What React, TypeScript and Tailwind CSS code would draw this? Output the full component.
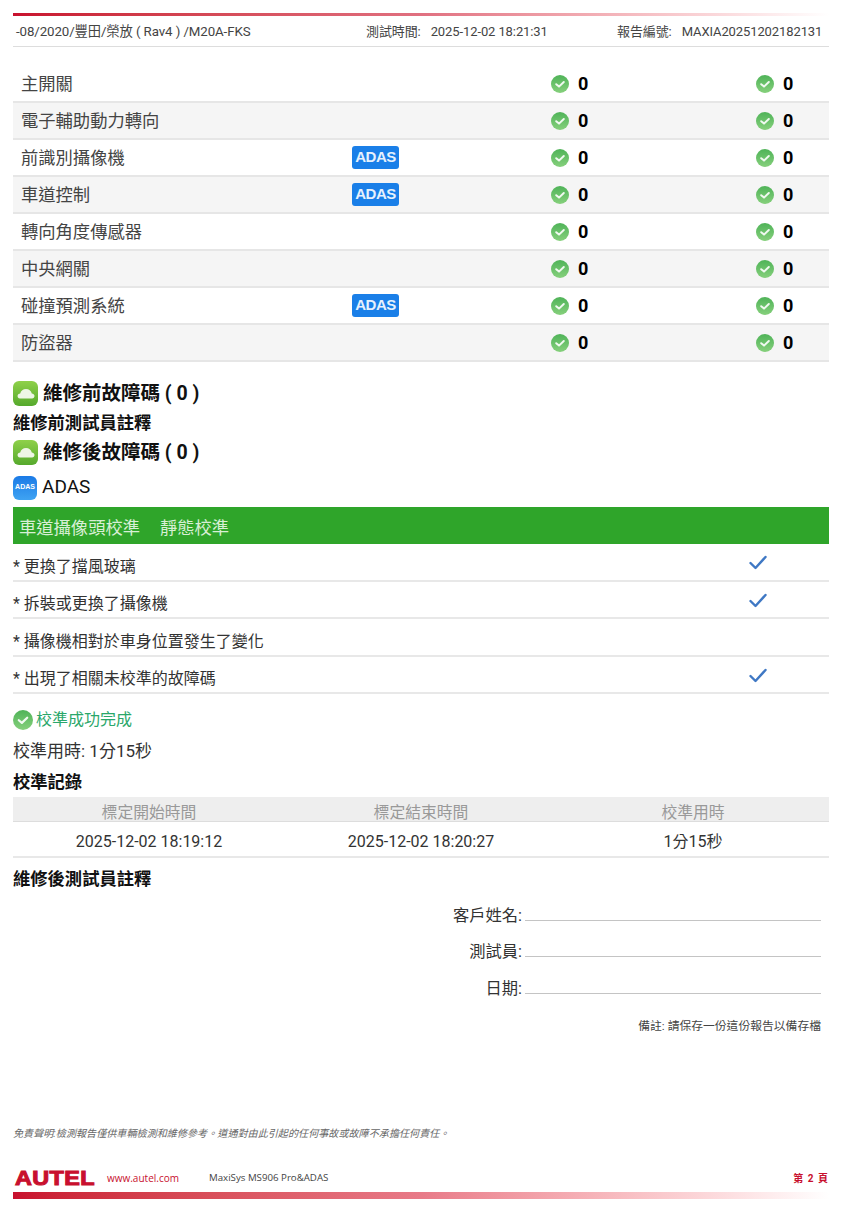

const Check = ({ s = 18 }: { s?: number }) => (
  <svg width={s} height={s} viewBox="0 0 18 18" className="shrink-0">
    <defs>
      <linearGradient id="gc" x1="0" y1="0" x2="0" y2="1">
        <stop offset="0" stopColor="#4fb358" />
        <stop offset="1" stopColor="#86d07c" />
      </linearGradient>
    </defs>
    <circle cx="9" cy="9" r="9" fill="url(#gc)" />
    <path d="M5.2 9.2 L8 11.6 L12.8 7" fill="none" stroke="#fff" strokeWidth="2" strokeLinecap="round" strokeLinejoin="round" opacity="0.9" />
  </svg>
);

const AdasBadge = () => (
  <div className="w-[47px] h-[23px] rounded-[3px] bg-[#1a7fe8] flex items-center justify-center text-[#e6f1fd] text-[15px] font-bold tracking-[-0.5px] font-['Liberation_Sans',sans-serif]">
    ADAS
  </div>
);

const CarIcon = () => (
  <div className="w-[25px] h-[25px] rounded-[6px] bg-gradient-to-b from-[#8fd14a] to-[#55a92c] flex items-center justify-center shrink-0">
    <svg width="18" height="11" viewBox="0 0 18 11">
      <path d="M3 10.5 C1.2 10.5 0.3 9 0.6 7.5 C0.9 6.2 2 5.4 3.2 5.4 C4 2.6 6 1 9 1 C12 1 14 2.6 14.8 5.4 C16.2 5.4 17.4 6.3 17.5 7.8 C17.6 9.3 16.5 10.5 15 10.5 Z" fill="#eef6e6" />
    </svg>
  </div>
);

const rows = [
  ["主開關", false],
  ["電子輔助動力轉向", false],
  ["前識別攝像機", true],
  ["車道控制", true],
  ["轉向角度傳感器", false],
  ["中央網關", false],
  ["碰撞預測系統", true],
  ["防盜器", false],
] as const;

const checks = [
  ["* 更換了擋風玻璃", true],
  ["* 拆裝或更換了攝像機", true],
  ["* 攝像機相對於車身位置發生了變化", false],
  ["* 出現了相關未校準的故障碼", true],
] as const;

const Zero = () => (
  <div className="flex items-center gap-[9px]">
    <Check />
    <span className="text-[18px] font-bold text-black leading-none">0</span>
  </div>
);

const SignRow = ({ label }: { label: string }) => (
  <div className="flex items-end justify-end h-[36.5px] pr-[8px]">
    <span className="text-[16.3px] text-[#333] leading-[22px] mr-[3px]">{label}</span>
    <div className="w-[296px] border-b border-[#c4c4c4] mb-[6px]" />
  </div>
);

export default function App() {
  return (
    <div className="w-[845px] h-[1209px] bg-white overflow-hidden pl-[13px] pr-[16px] pt-[13px] font-['Roboto','Noto_Sans_CJK_TC',sans-serif] text-[#333]">
      <div className="h-[3px] bg-gradient-to-r from-[#c8102e] via-[#e07080] to-white" />
      <div className="h-[31px] pt-[2px] border-b border-[#ddd] flex items-center text-[13px] text-[#444] pl-[3px] tracking-[-0.1px] whitespace-nowrap">
        <span className="w-[350px] text-[13.3px]">-08/2020/豐田/榮放 ( Rav4 ) /M20A-FKS</span>
        <span className="w-[251px]">測試時間:<span className="ml-[10px]">2025-12-02 18:21:31</span></span>
        <span>報告編號:<span className="ml-[10px]">MAXIA20251202182131</span></span>
      </div>

      <div className="mt-[19px]">
        {rows.map(([name, adas], i) => (
          <div
            key={name}
            className={`h-[37px] border-b-2 border-[#e6e6e6] flex items-center text-[17.3px] text-[#444] pl-[8px] ${i % 2 ? "bg-[#f5f5f5]" : "bg-white"}`}
          >
            <span className="w-[331px] pt-[3px]">{name}</span>
            <div className="w-[199px]">{adas && <AdasBadge />}</div>
            <div className="w-[205px]"><Zero /></div>
            <Zero />
          </div>
        ))}
      </div>

      <div className="mt-[17px] flex items-center gap-[5px] h-[29px]">
        <CarIcon />
        <span className="text-[19.5px] font-bold text-[#111]">維修前故障碼 ( 0 )</span>
      </div>
      <div className="text-[17.3px] font-bold text-[#111] h-[30px] leading-[30px]">維修前測試員註釋</div>
      <div className="flex items-center gap-[5px] h-[29px]">
        <CarIcon />
        <span className="text-[19.5px] font-bold text-[#111]">維修後故障碼 ( 0 )</span>
      </div>
      <div className="flex items-center gap-[5px] h-[35px] mt-[3px]">
        <div className="w-[24px] h-[24px] rounded-[6px] bg-gradient-to-b from-[#1b7ae6] to-[#3fa3f2] flex items-center justify-center text-white text-[7px] font-bold font-['Liberation_Sans',sans-serif]">
          ADAS
        </div>
        <span className="text-[19px] text-[#111]">ADAS</span>
      </div>

      <div className="mt-[2px] h-[37px] pt-[7px] bg-[#2fa52a] flex items-center pl-[6px] text-[17.3px] text-[#d8efd5] gap-[20px]">
        <span>車道攝像頭校準</span>
        <span>靜態校準</span>
      </div>

      <div>
        {checks.map(([t, c]) => (
          <div key={t} className="h-[37.5px] border-b-2 border-[#e8e8e8] flex items-center justify-between text-[16px] text-[#333]">
            <span className="pt-[10px]">{t}</span>
            {c && (
              <svg width="18" height="15" viewBox="0 0 18 15" className="mr-[62px] mt-[2px]">
                <path d="M1.5 8 L6.5 13 L16.5 2" fill="none" stroke="#3f78c4" strokeWidth="2.4" strokeLinecap="round" strokeLinejoin="round" />
              </svg>
            )}
          </div>
        ))}
      </div>

      <div className="mt-[16px] flex items-center gap-[3px] h-[20px]">
        <Check s={20} />
        <span className="text-[16px] text-[#2aa76a]">校準成功完成</span>
      </div>
      <div className="mt-[10px] text-[17px] text-[#333] h-[22px] leading-[22px]">校準用時: 1分15秒</div>
      <div className="mt-[8px] text-[17.3px] font-bold text-[#111] h-[24px] leading-[24px]">校準記錄</div>

      <div className="mt-[3px] grid grid-cols-[272px_272px_1fr] h-[25px] pt-[4px] bg-[#eeeeee] border-b border-[#ddd] items-center text-center text-[15.8px] text-[#999]">
        <span>標定開始時間</span>
        <span>標定結束時間</span>
        <span>校準用時</span>
      </div>
      <div className="grid grid-cols-[272px_272px_1fr] h-[36px] pt-[5px] border-b-2 border-[#e8e8e8] items-center text-center text-[16px] text-[#333]">
        <span>2025-12-02 18:19:12</span>
        <span>2025-12-02 18:20:27</span>
        <span>1分15秒</span>
      </div>

      <div className="mt-[9px] text-[17.3px] font-bold text-[#111] h-[23px] leading-[24px]">維修後測試員註釋</div>

      <div>
        <SignRow label="客戶姓名:" />
        <SignRow label="測試員:" />
        <SignRow label="日期:" />
      </div>

      <div className="mt-[17px] text-right text-[11.8px] text-[#444] pr-[8px] leading-[18px]">備註: 請保存一份這份報告以備存檔</div>

      <div className="mt-[92px] text-[10.1px] italic text-[#666] leading-[14px]">免責聲明:檢測報告僅供車輛檢測和維修參考。道通對由此引起的任何事故或故障不承擔任何責任。</div>

      <div className="mt-[26px] flex items-center h-[24px] pl-[2px]">
        <span className="w-[92px] text-[19.5px] font-bold tracking-[0.3px] text-[#c8102e] leading-none font-['Liberation_Sans',sans-serif] [-webkit-text-stroke:1px_#c8102e] [transform:scaleX(1.2)] origin-left">AUTEL</span>
        <span className="text-[10px] text-[#c8102e] w-[102px] font-['Open_Sans',sans-serif]">www.autel.com</span>
        <span className="text-[9.7px] text-[#444] font-['Open_Sans',sans-serif]">MaxiSys MS906 Pro&amp;ADAS</span>
        <span className="ml-auto text-[10px] font-bold text-[#c8102e] tracking-[1px]">第 2 頁</span>
      </div>
      <div className="mt-[1px] h-[7px] bg-gradient-to-r from-[#c8102e] via-[#e87a88] to-white" />
    </div>
  );
}
